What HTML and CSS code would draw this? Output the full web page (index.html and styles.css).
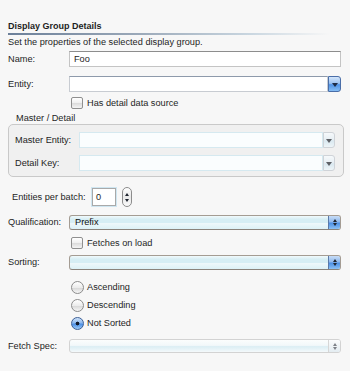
FILE: index.html
```html
<html>
    <head>
        <link rel="stylesheet" href="styles.css">
    </head>
    <body>
        <div class="panel">
            <div class="title">Display Group Details</div>
            <div class="hint">Set the properties of the selected display group.</div>

            <div class="row name-row">
                <span class="label">Name:</span>
                <div class="field">Foo</div>
            </div>

            <div class="row entity-row">
                <span class="label">Entity:</span>
                <div class="combo">
                    <div class="combo-input"></div>
                    <div class="combo-btn"><span class="arrow-down"></span></div>
                </div>
            </div>

            <div class="check-row detail-check">
                <span class="check"></span>
                <span>Has detail data source</span>
            </div>

            <div class="group-title">Master / Detail</div>
            <div class="group">
                <div class="row">
                    <span class="label group-label">Master Entity:</span>
                    <div class="combo off">
                        <div class="combo-input"></div>
                        <div class="combo-btn"><span class="arrow-down"></span></div>
                    </div>
                </div>
                <div class="row key-row">
                    <span class="label group-label">Detail Key:</span>
                    <div class="combo off">
                        <div class="combo-input"></div>
                        <div class="combo-btn"><span class="arrow-down"></span></div>
                    </div>
                </div>
            </div>

            <div class="row batch-row">
                <span class="batch-label">Entities per batch:</span>
                <div class="num">0</div>
                <div class="stepper">
                    <span class="tri-up"></span>
                    <span class="tri-down"></span>
                </div>
            </div>

            <div class="row qual-row">
                <span class="label">Qualification:</span>
                <div class="popup">
                    <div class="popup-text">Prefix</div>
                    <div class="popup-btn"><span class="tri-up"></span><span class="tri-down"></span></div>
                </div>
            </div>

            <div class="check-row fetch-check">
                <span class="check"></span>
                <span>Fetches on load</span>
            </div>

            <div class="row sort-row">
                <span class="label">Sorting:</span>
                <div class="popup">
                    <div class="popup-text"></div>
                    <div class="popup-btn"><span class="tri-up"></span><span class="tri-down"></span></div>
                </div>
            </div>

            <div class="radios">
                <div class="radio-row"><span class="radio"></span><span>Ascending</span></div>
                <div class="radio-row"><span class="radio"></span><span>Descending</span></div>
                <div class="radio-row"><span class="radio on"></span><span>Not Sorted</span></div>
            </div>

            <div class="row spec-row">
                <span class="label">Fetch Spec:</span>
                <div class="popup off">
                    <div class="popup-text"></div>
                    <div class="popup-btn"><span class="tri-up"></span><span class="tri-down"></span></div>
                </div>
            </div>
        </div>
    </body>
</html>
```

FILE: styles.css
```css
* {
    margin: 0;
    padding: 0;
    box-sizing: border-box;
}

html,body {
    height: 100%;
}

body {
    background: #f7f7f7;
    font-family: "Liberation Sans", Arial, sans-serif;
    font-size: 9.2px;
    line-height: 13px;
    color: #1e1e1e;
}

.panel {
    padding: 20px 6px 0 8px;
}

.title {
    font-weight: bold;
    font-size: 9px;
    height: 13px;
}

.title:after {
    content: "";
    display: block;
    height: 2px;
    width: 322px;
    background: linear-gradient(to right, #6b7f99 0%, #9aa8b8 40%, #c9d6e0 75%, rgba(220, 240, 248, 0) 100%);
}

.hint {
    margin-top: 3px;
}

.row {
    display: flex;
    align-items: center;
    padding-right: 3px;
}

.label {
    width: 61px;
    flex: none;
}

.name-row {
    margin-top: 2px;
}

.field {
    flex: 1;
    height: 16px;
    background: #fff;
    border: 1px solid #c4c4c4;
    border-top-color: #8d8d8d;
    padding-left: 4px;
    line-height: 14px;
}

.entity-row {
    margin-top: 9px;
}

.combo {
    flex: 1;
    display: flex;
    height: 16px;
}

.combo-input {
    flex: 1;
    background: #fff;
    border: 1px solid #c8ccd2;
    border-top-color: #8e9aab;
}

.combo-btn {
    width: 13px;
    border: 1px solid #4a6ea8;
    border-radius: 0 3px 3px 0;
    background: linear-gradient(#d4e6fb 0%, #9cc2f0 45%, #4f93e6 55%, #86bdf4 100%);
    display: flex;
    align-items: center;
    justify-content: center;
}

.arrow-down {
    width: 0;
    height: 0;
    border-left: 3px solid transparent;
    border-right: 3px solid transparent;
    border-top: 4px solid #1d2b45;
    margin-top: 2px;
}

.combo.off .combo-input {
    border-color: #d5e9f0;
    background: #fafdfe;
}

.combo.off .combo-btn {
    border: 1px solid #cfd3d8;
    background: linear-gradient(#f6f9fb 0%, #e6eef3 50%, #d9e8f0 55%, #eef5f8 100%);
    width: 12px;
}

.combo.off .arrow-down {
    border-top-color: #5d6066;
}

.check-row {
    display: flex;
    align-items: center;
    padding-left: 63px;
    height: 12px;
}

.check {
    width: 12px;
    height: 12px;
    border: 1px solid #8f8f8f;
    border-radius: 2px;
    background: linear-gradient(#ffffff 0%, #efefef 50%, #dcdcdc 55%, #f4f4f4 100%);
    margin-right: 4px;
    flex: none;
}

.detail-check {
    margin-top: 5px;
}

.group-title {
    margin-top: 3px;
    padding-left: 8px;
    height: 12px;
    line-height: 12px;
}

.group {
    border: 1px solid #c9c9c9;
    border-radius: 5px;
    background: #f0f0f0;
    padding: 7px 8px 5px 6px;
}

.group .row {
    padding-right: 0;
}

.group-label {
    width: 64px;
}

.key-row {
    margin-top: 7px;
}

.batch-row {
    margin-top: 10px;
    height: 20px;
    padding-left: 4px;
}

.batch-label {
    width: 80px;
}

.num {
    width: 24px;
    height: 18px;
    background: #fff;
    border: 1px solid #a9a9a9;
    box-shadow: 0 0 0 1px #cfe6f1;
    padding-left: 3px;
    line-height: 16px;
}

.stepper {
    margin-left: 6px;
    width: 10px;
    height: 20px;
    border: 1px solid #8c8c8c;
    border-radius: 5px;
    background: linear-gradient(#ffffff 0%, #e8e8e8 50%, #fafafa 100%);
    display: flex;
    flex-direction: column;
    align-items: center;
    justify-content: center;
    gap: 3px;
}

.tri-up {
    width: 0;
    height: 0;
    border-left: 2px solid transparent;
    border-right: 2px solid transparent;
    border-bottom: 3px solid #1f2530;
}

.tri-down {
    width: 0;
    height: 0;
    border-left: 2px solid transparent;
    border-right: 2px solid transparent;
    border-top: 3px solid #1f2530;
}

.qual-row {
    margin-top: 8px;
}

.popup {
    flex: 1;
    display: flex;
    height: 15px;
    border: 1px solid #a49c93;
    border-bottom-color: #8a837b;
    border-radius: 3px;
    overflow: hidden;
    background: linear-gradient(#f1fafc 0%, #d6eef4 25%, #d6eef4 50%, #eef8fa 55%, #dcf1f6 100%);
}

.popup-text {
    flex: 1;
    padding-left: 5px;
    line-height: 13px;
    color: #111;
}

.popup-btn {
    width: 12px;
    border-left: 1px solid #5a79a8;
    background: linear-gradient(#c8ddf7 0%, #8fb8ec 45%, #4c8fe4 55%, #8cc1f5 100%);
    display: flex;
    flex-direction: column;
    align-items: center;
    justify-content: center;
    gap: 1px;
}

.fetch-check {
    margin-top: 7px;
}

.sort-row {
    margin-top: 6px;
}

.radios {
    margin-top: 11px;
    padding-left: 63px;
}

.radio-row {
    display: flex;
    align-items: center;
    height: 13px;
    margin-bottom: 5px;
}

.radio {
    width: 13px;
    height: 13px;
    border: 1px solid #8c8c8c;
    border-radius: 50%;
    background: linear-gradient(#ffffff 0%, #ececec 50%, #d8d8d8 55%, #f6f6f6 100%);
    margin-right: 3px;
    flex: none;
}

.radio.on {
    border-color: #3d5f95;
    background: radial-gradient(circle, #10182a 0, #10182a 1.6px, transparent 2.2px),
        linear-gradient(#cfe3fa 0%, #8db8ee 45%, #4b8ee4 55%, #9ccaf7 100%);
}

.spec-row {
    margin-top: 9px;
}

.popup.off {
    border-color: #d3d3d3;
    height: 14px;
    background: linear-gradient(#fbfdfd 0%, #f2f8fa 45%, #dbeef4 55%, #f4f9fb 100%);
}

.popup.off .popup-btn {
    border-left-color: #d6d6d6;
    background: linear-gradient(#fbfcfd 0%, #eef3f6 50%, #e4edf2 100%);
}

.popup.off .tri-up {
    border-bottom-color: #7d8188;
}

.popup.off .tri-down {
    border-top-color: #7d8188;
}
```
